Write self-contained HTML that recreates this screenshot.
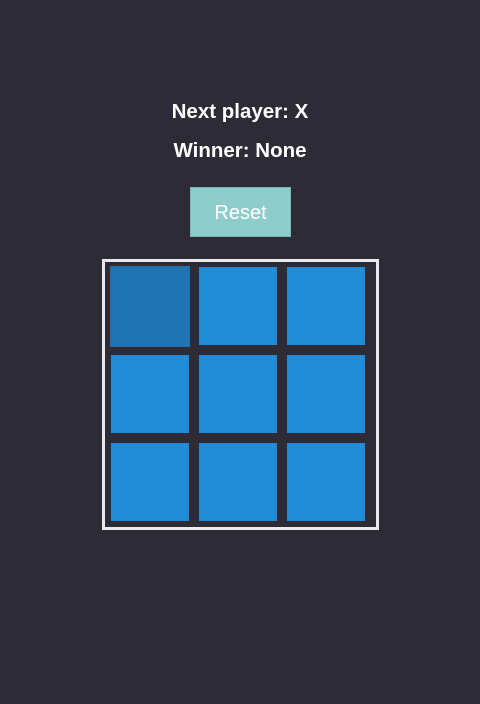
<!DOCTYPE html>
<html><head><style>
html,body{margin:0;padding:0;background:#2c2b36;width:480px;height:704px;overflow:hidden;font-family:"Liberation Sans",sans-serif}
.t{position:absolute;left:0;width:480px;text-align:center;color:#fff;font-weight:bold;font-size:20.5px}
.btn{position:absolute;left:190px;top:187px;width:101px;height:50px;background:#8fcdcc;color:#fff;font-size:20px;line-height:50px;text-align:center;box-sizing:border-box;border:1px solid #7ab8b8}
.board{position:absolute;left:102px;top:259px;width:277px;height:271px;box-sizing:border-box;border:3px solid #e8e8f0}
.c{position:absolute;width:78px;height:78px;background:#228bd6}
</style></head><body>
<div class="t" style="top:100px">Next player: X</div>
<div class="t" style="top:139px">Winner: None</div>
<div class="btn">Reset</div>
<div class="board"></div>
<div class="c" style="left:110px;top:266px;width:80px;height:81px;background:#1f74b3;box-sizing:border-box;border:1px solid #2a6fa0"></div>
<div class="c" style="left:199px;top:267px"></div>
<div class="c" style="left:287px;top:267px"></div>
<div class="c" style="left:111px;top:355px"></div>
<div class="c" style="left:199px;top:355px"></div>
<div class="c" style="left:287px;top:355px"></div>
<div class="c" style="left:111px;top:443px"></div>
<div class="c" style="left:199px;top:443px"></div>
<div class="c" style="left:287px;top:443px"></div>
</body></html>
